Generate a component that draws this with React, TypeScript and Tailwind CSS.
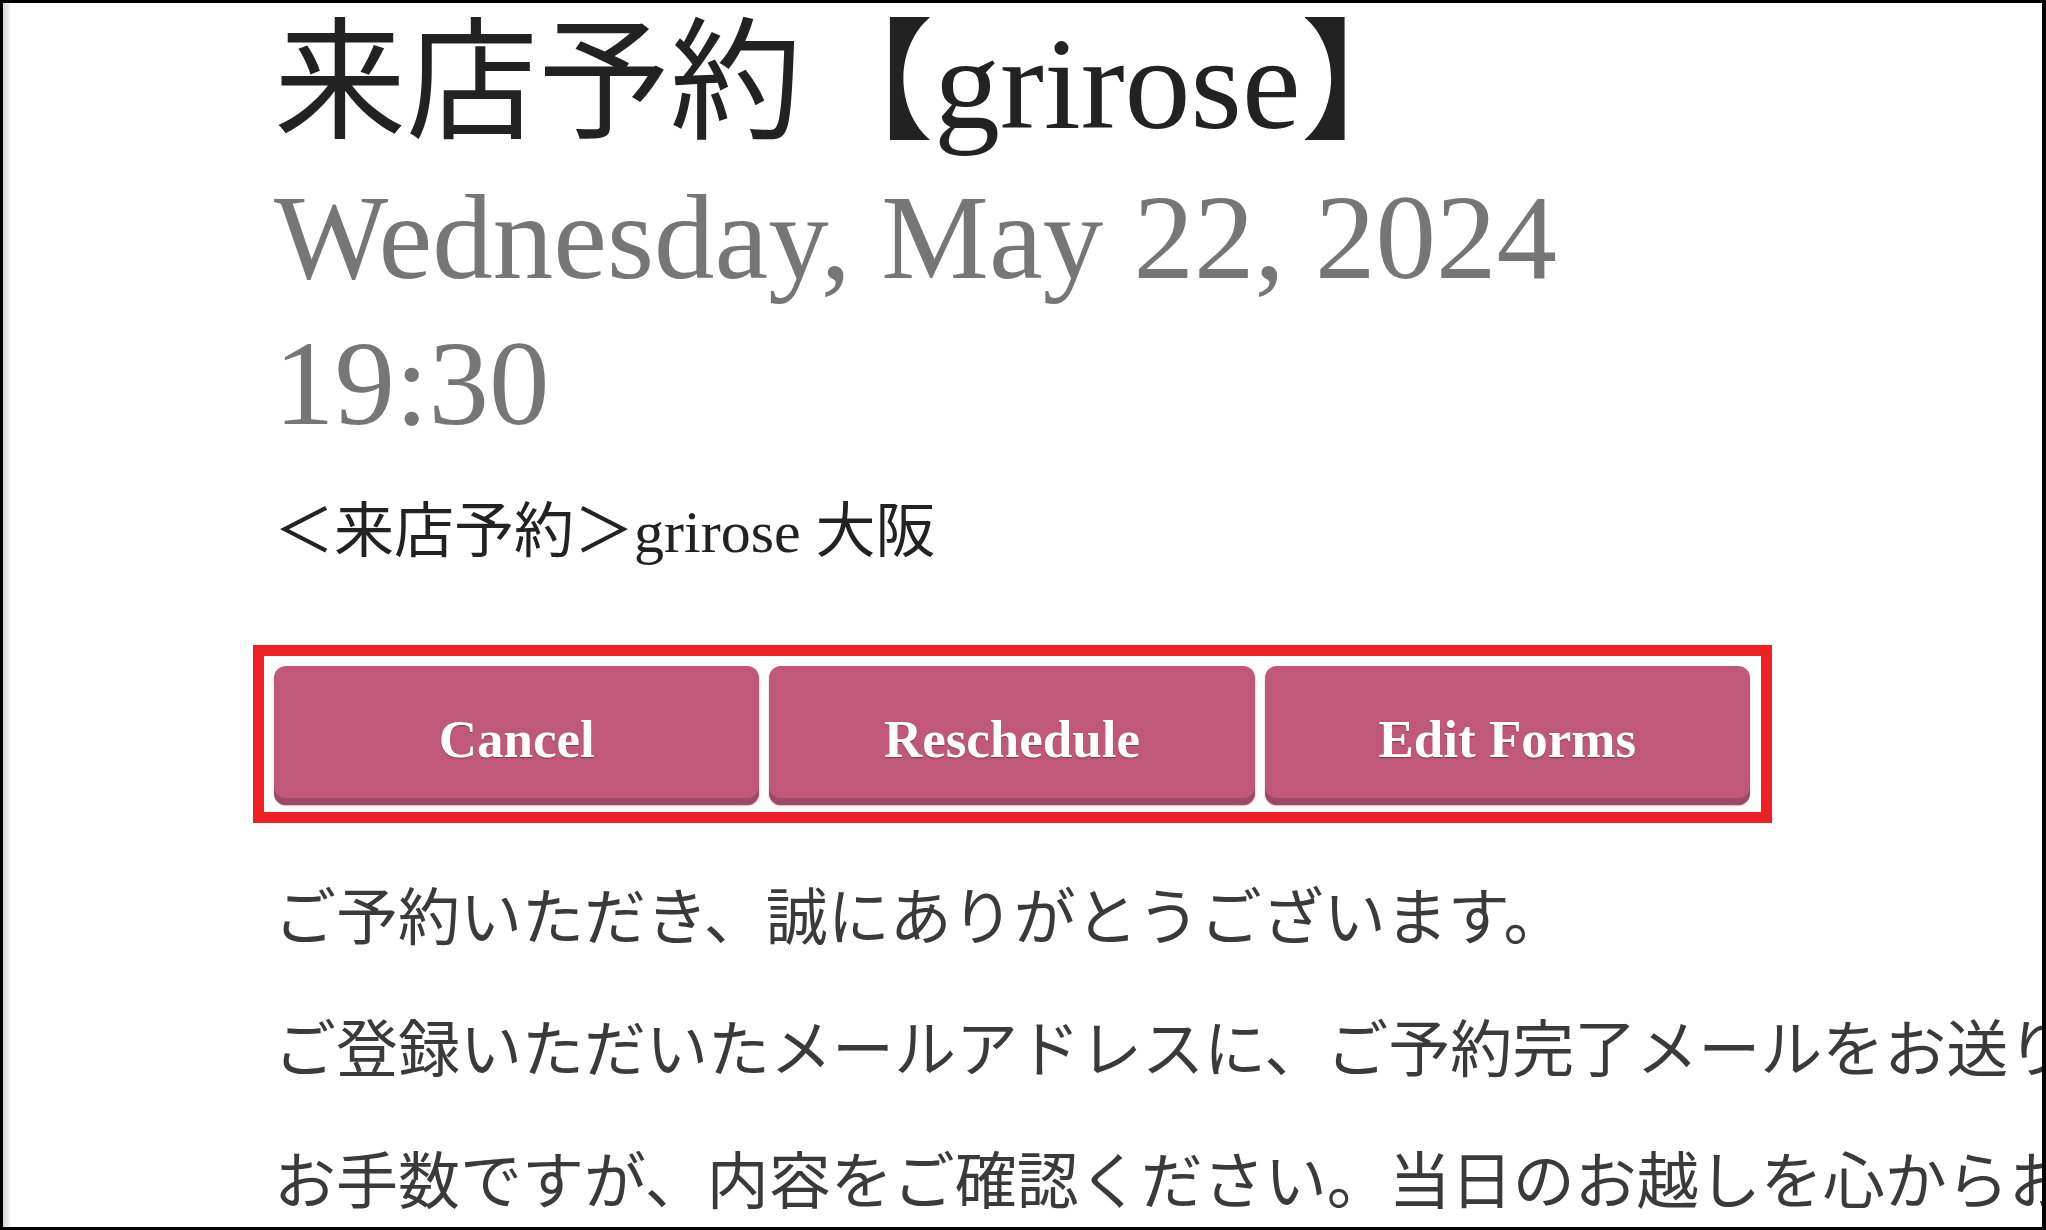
import * as React from "react"

const SERIF = "font-['Liberation_Serif','Noto_Sans_CJK_JP',serif]"

const ACTIONS = ["Cancel", "Reschedule", "Edit Forms"]

const MESSAGES = [
  "ご予約いただき、誠にありがとうございます。",
  "ご登録いただいたメールアドレスに、ご予約完了メールをお送りしました。",
  "お手数ですが、内容をご確認ください。当日のお越しを心からお待ちしております。",
]

function ActionButton({ label }: { label: string }) {
  return (
    <button
      type="button"
      className={`h-[139px] rounded-[12px] bg-[#c0587a] pt-[15px] pb-[7px] flex items-center justify-center text-white font-bold text-[53px] ${SERIF} shadow-[inset_0_-7px_0_#a14767,0_1px_2px_rgba(0,0,0,0.25)] [text-shadow:0_1px_1px_rgba(0,0,0,0.35)]`}
    >
      {label}
    </button>
  )
}

export default function App() {
  return (
    <div className="w-[2046px] h-[1230px] bg-white border-[3px] border-r-4 border-black overflow-hidden flex">
      <div className="w-[7px] shrink-0 bg-linear-to-r from-[#d6d6d6] to-[#f3f3f3]" />
      <main className="flex-1 min-w-0 pl-[264px] pt-[3px]">
        <h1 className={`text-[132px] leading-[155px] text-[#222] font-normal whitespace-nowrap ${SERIF}`}>
          来店予約【grirose】
        </h1>
        <div className={`mt-[3px] text-[121px] leading-[146px] text-[#767676] ${SERIF}`}>
          <div>Wednesday, May 22, 2024</div>
          <div>19:30</div>
        </div>
        <p className={`mt-[36px] text-[60px] leading-[80px] text-[#222] whitespace-nowrap ${SERIF}`}>
          ＜来店予約＞grirose 大阪
        </p>

        <div className="mt-[73px] -ml-[21px] w-[1519px] border-[11px] border-[#ee2024] pt-[10px] pb-[7px] pl-[10px] pr-[11px]">
          <div className="grid grid-cols-3 gap-[10px]">
            {ACTIONS.map((a) => (
              <ActionButton key={a} label={a} />
            ))}
          </div>
        </div>

        <div className="mt-[24px] font-['Noto_Sans_CJK_JP',sans-serif] text-[62px] leading-[132px] text-[#3a3a3a]">
          {MESSAGES.map((m) => (
            <p key={m} className="whitespace-nowrap">
              {m}
            </p>
          ))}
        </div>
      </main>
    </div>
  )
}
